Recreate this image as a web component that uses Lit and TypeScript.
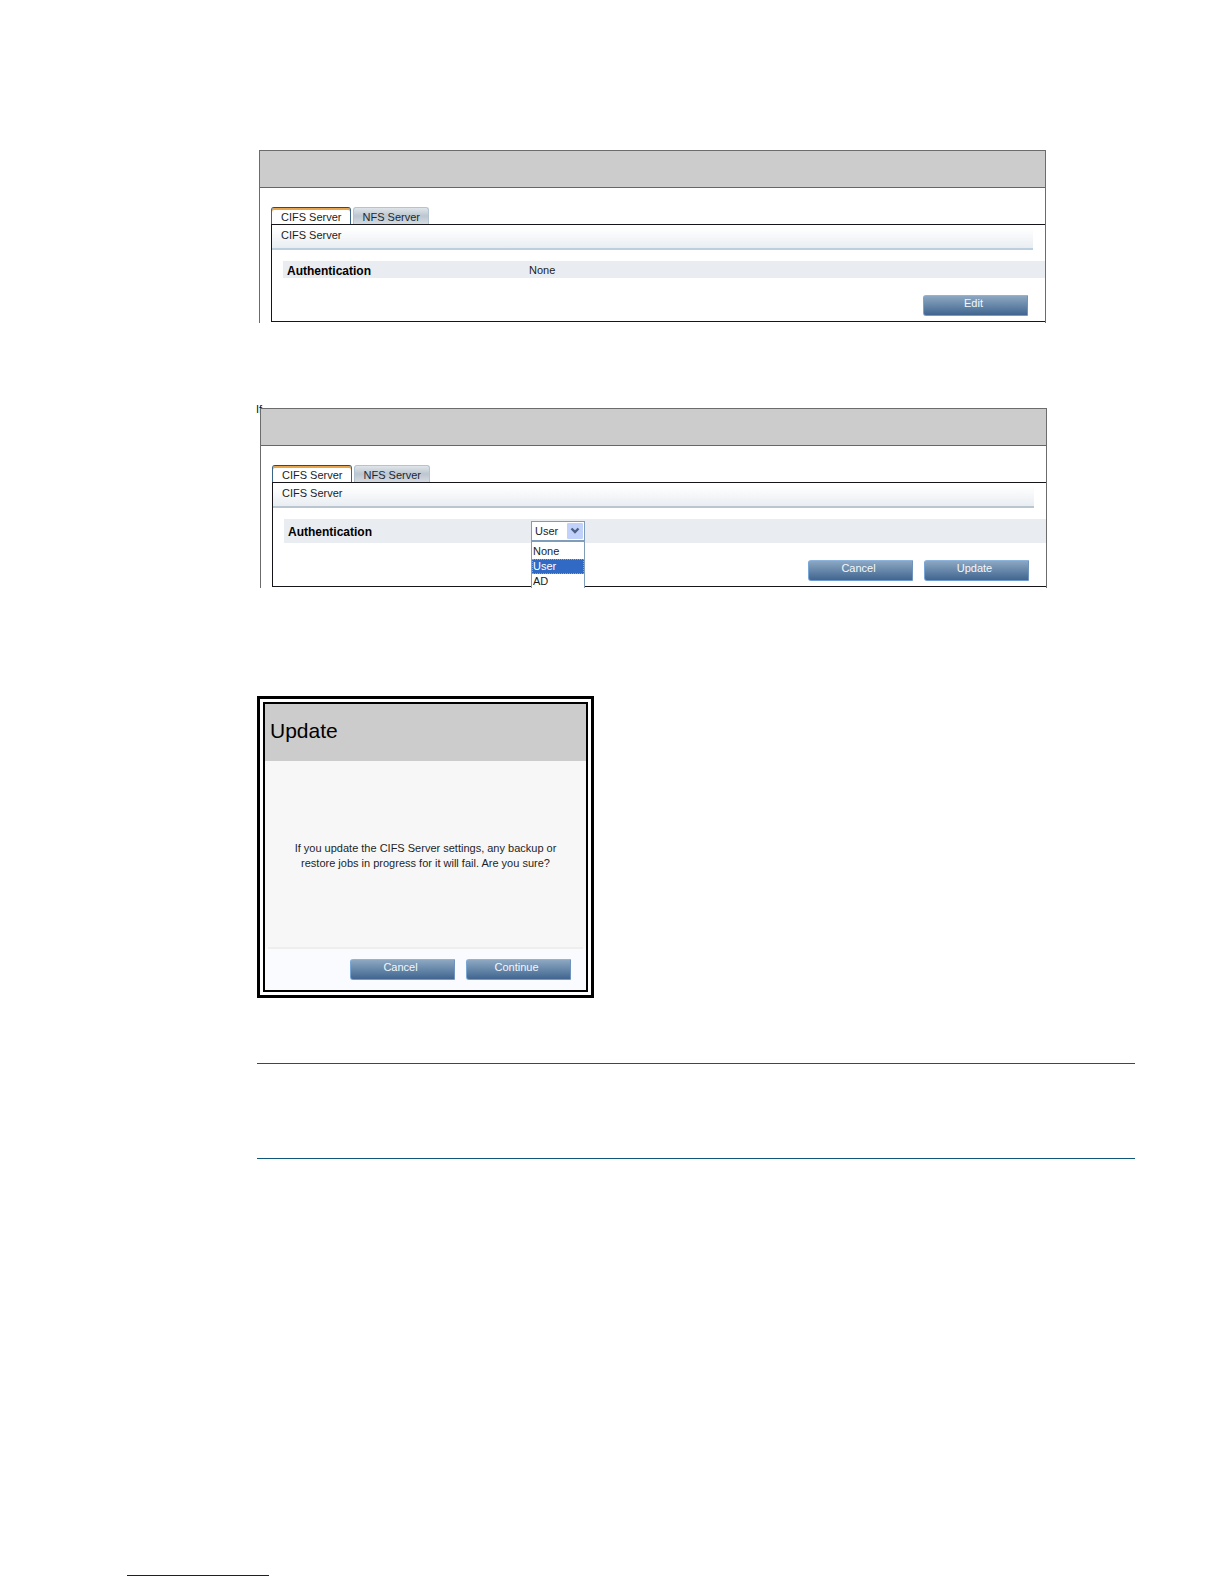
import { LitElement, html, css, svg } from "lit";
import { customElement, property } from "lit/decorators.js";
import { classMap } from "lit/directives/class-map.js";

const buttonStyles = css`
  .button {
    width: 105px;
    height: 21px;
    margin: 0;
    padding: 0 4px 4px 0;
    border: 1px solid;
    border-color: #8db4dc #6f93ba #6f9dcc #7aa6d6;
    border-radius: 3px 0 0 3px;
    background: linear-gradient(#8ca7c2, #6687a9 50%, #41658f);
    color: #f4f8fc;
    font: 11px/15px "Liberation Sans", Arial, sans-serif;
    text-align: center;
    cursor: pointer;
  }
`;

@customElement("server-panel")
export class ServerPanel extends LitElement {
  @property({ type: Boolean }) editing = false;
  @property({ attribute: false }) actions: string[] = [];

  static styles = [
    buttonStyles,
    css`
      :host {
        display: block;
        color: #1c1c1c;
        font: 11px/14px "Liberation Sans", Arial, sans-serif;
      }
      .panel {
        border: 1px solid #6c6c6c;
        border-bottom: 0;
        padding-bottom: 1px;
        background: #fff;
      }
      .banner {
        height: 36px;
        border-bottom: 1px solid #666;
        background: #ccc;
      }
      .tabs {
        display: flex;
        gap: 2px;
        padding: 19px 0 0 11px;
      }
      .tab {
        box-sizing: border-box;
        height: 17px;
        margin: 0;
        padding: 1px 8px 0 9px;
        border: 1px solid #b3c3cf;
        border-bottom: 0;
        border-radius: 3px 3px 0 0;
        background: linear-gradient(#dfe5ea, #bcc6d0 50%, #d5dbe1);
        color: #1c2733;
        font: inherit;
      }
      .tab.current {
        border-color: #34495c #3a6386 #3a6386;
        background: #fff;
        box-shadow: inset 0 2px #e9a54b;
        color: #1c1c1c;
      }
      .card {
        margin-left: 11px;
        border: solid #16161a;
        border-width: 1px 0 1px 1px;
      }
      .title {
        box-sizing: border-box;
        height: 25px;
        margin: 0 12px 0 0;
        padding: 3px 9px 0;
        border-bottom: 2px solid #bccfdf;
        background: linear-gradient(#fff 15%, #e9edf2);
        font: inherit;
      }
      .editing .title {
        border-bottom-color: #b9c5cf;
      }
      .row {
        display: grid;
        grid-template-columns: 242px 1fr;
        align-items: center;
        height: 17px;
        margin: 11px 0 0 11px;
        padding-left: 4px;
        background: #e9ecf0;
      }
      .editing .row {
        height: 24px;
      }
      .name {
        padding-top: 2px;
        color: #000;
        font-size: 12px;
        font-weight: bold;
      }
      .picker {
        position: relative;
        width: 54px;
        margin-left: 1px;
      }
      .select {
        display: block;
        box-sizing: border-box;
        width: 100%;
        height: 20px;
        padding: 0 0 0 3px;
        border: 1px solid #7f9db9;
        border-radius: 0;
        appearance: none;
        background: #fff;
        color: #1c1c1c;
        font: inherit;
      }
      .arrow {
        position: absolute;
        top: 2px;
        right: 2px;
        width: 16px;
        height: 16px;
        pointer-events: none;
      }
      .options {
        position: absolute;
        top: 20px;
        left: 0;
        right: 0;
        height: 47px;
        box-sizing: border-box;
        margin: 0;
        padding: 2px 0 0;
        overflow: hidden;
        border: solid #7f9db9;
        border-width: 1px 1px 0;
        background: #fff;
        list-style: none;
        line-height: 15px;
      }
      .option {
        padding-left: 1px;
      }
      .option.chosen {
        background: #316ac5;
        outline: 1px dotted #cf9a4f;
        outline-offset: -1px;
        color: #fff;
      }
      .actions {
        display: flex;
        justify-content: flex-end;
        gap: 11px;
        padding: 17px 17px 5px 0;
      }
    `,
  ];

  private renderValue() {
    if (!this.editing) return html`<span>None</span>`;
    const choices = ["None", "User", "AD"];
    return html`
      <div class="picker">
        <select class="select" id="authentication">
          ${choices.map((c) => html`<option ?selected=${c === "User"}>${c}</option>`)}
        </select>
        <svg class="arrow" viewBox="0 0 16 16" aria-hidden="true">
          ${svg`<rect width="16" height="16" rx="1" fill="#c2d1fa" />
          <path d="M4.5 5.5 8 9 11.5 5.5" fill="none" stroke="#4d6185" stroke-width="2.4" />`}
        </svg>
        <ul class="options" role="listbox" aria-label="Authentication">
          ${choices.map(
            (c) => html`<li
              role="option"
              aria-selected=${c === "User"}
              class=${classMap({ option: true, chosen: c === "User" })}
            >${c}</li>`
          )}
        </ul>
      </div>
    `;
  }

  render() {
    return html`
      <section class=${classMap({ panel: true, editing: this.editing })}>
        <div class="banner"></div>
        <div class="tabs" role="tablist">
          <button class="tab current" role="tab" aria-selected="true">CIFS Server</button>
          <button class="tab" role="tab" aria-selected="false">NFS Server</button>
        </div>
        <div class="card">
          <h2 class="title">CIFS Server</h2>
          <div class="row">
            ${this.editing
              ? html`<label class="name" for="authentication">Authentication</label>`
              : html`<span class="name">Authentication</span>`}
            ${this.renderValue()}
          </div>
          <div class="actions">
            ${this.actions.map((a) => html`<button class="button">${a}</button>`)}
          </div>
        </div>
      </section>
    `;
  }
}

@customElement("confirm-dialog")
export class ConfirmDialog extends LitElement {
  static styles = [
    buttonStyles,
    css`
      :host {
        display: block;
        color: #1f1f1f;
        font: 11px/15px "Liberation Sans", Arial, sans-serif;
      }
      .frame {
        padding: 3px;
        border: 3px solid #000;
        background: #fff;
      }
      .dialog {
        border: 2px solid #000;
        background: #f7f7f7;
      }
      .title {
        margin: 0;
        padding: 15px 5px 18px;
        background: #ccc;
        color: #000;
        font-size: 21px;
        font-weight: normal;
        line-height: 24px;
      }
      .message {
        display: grid;
        place-items: center;
        box-sizing: border-box;
        height: 188px;
        margin: 0 3px;
        padding: 4px 12px 0;
        border-bottom: 2px solid #eeeeec;
        text-align: center;
      }
      .text {
        margin: 0;
      }
      .actions {
        display: flex;
        justify-content: flex-end;
        gap: 11px;
        padding: 10px 15px 10px;
        background: #f9fbfe;
      }
    `,
  ];

  render() {
    return html`
      <div class="frame">
        <div class="dialog" role="dialog" aria-labelledby="title">
          <h2 class="title" id="title">Update</h2>
          <div class="message">
            <p class="text">
              If you update the CIFS Server settings, any backup or<br />
              restore jobs in progress for it will fail. Are you sure?
            </p>
          </div>
          <div class="actions">
            <button class="button">Cancel</button>
            <button class="button">Continue</button>
          </div>
        </div>
      </div>
    `;
  }
}

@customElement("app-root")
export class AppRoot extends LitElement {
  static styles = css`
    :host {
      display: block;
      background: #fff;
    }
    .page {
      padding: 150px 89px 0 257px;
    }
    .view {
      margin: 0 89px 0 2px;
    }
    .edit {
      position: relative;
      margin: 85px 88px 0 3px;
    }
    .lead {
      position: absolute;
      top: -5px;
      left: -4px;
      margin: 0;
      color: #111;
      font: 11px/12px "Liberation Sans", Arial, sans-serif;
    }
    .panel {
      position: relative;
    }
    .confirm {
      width: 337px;
      margin-top: 108px;
    }
    .note {
      height: 94px;
      margin-top: 65px;
      border: solid #10567a;
      border-width: 1px 0;
    }
    .footer {
      padding: 416px 0 8px 127px;
    }
    .rule {
      width: 142px;
      height: 1px;
      margin: 0;
      border: 0;
      background: #14147c;
    }
  `;

  render() {
    return html`
      <main class="page">
        <server-panel class="view" .actions=${["Edit"]}></server-panel>
        <div class="edit">
          <p class="lead">If</p>
          <server-panel class="panel" editing .actions=${["Cancel", "Update"]}></server-panel>
        </div>
        <confirm-dialog class="confirm"></confirm-dialog>
        <div class="note"></div>
      </main>
      <footer class="footer"><hr class="rule" /></footer>
    `;
  }
}
